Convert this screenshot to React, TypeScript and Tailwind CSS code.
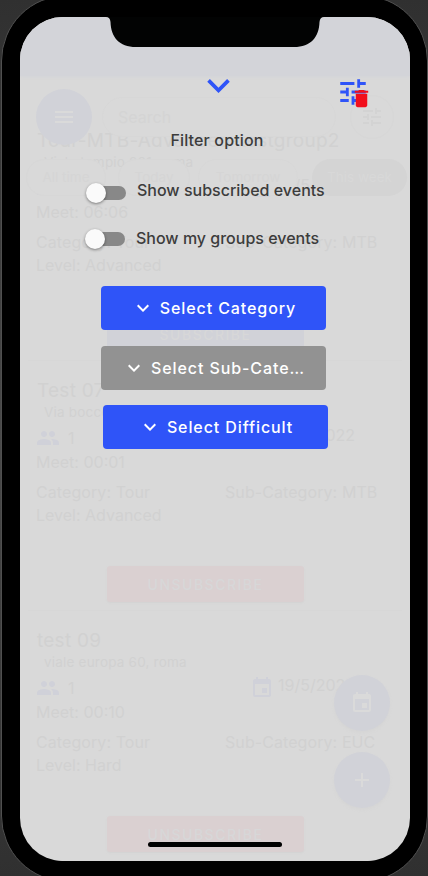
import { useState } from 'react';
import { MdAdd, MdDelete, MdEvent, MdExpandMore, MdGroup, MdMenu, MdTune } from 'react-icons/md';

interface EventItem {
    title: string;
    place: string;
    people: number;
    date: string;
    meet: string;
    category: string;
    subCategory: string;
    level: string;
    subscribed: boolean;
}

const events: EventItem[] = [
    {
        title: 'Tour-MTB-Advanced-testgroup2',
        place: 'Viale tempio 201, roma',
        people: 1,
        date: '19/5/2022',
        meet: '06:06',
        category: 'Tour',
        subCategory: 'MTB',
        level: 'Advanced',
        subscribed: false,
    },
    {
        title: 'Test 07',
        place: 'Via boccea 20, roma',
        people: 1,
        date: '19/5/2022',
        meet: '00:01',
        category: 'Tour',
        subCategory: 'MTB',
        level: 'Advanced',
        subscribed: true,
    },
    {
        title: 'test 09',
        place: 'viale europa 60, roma',
        people: 1,
        date: '19/5/2022',
        meet: '00:10',
        category: 'Tour',
        subCategory: 'EUC',
        level: 'Hard',
        subscribed: true,
    },
];

function EventCard({ event }: { event: EventItem }) {
    return (
        <div className="mx-2 h-[250px] shrink-0 border-b border-[#d7d7d7] pl-[8px] pt-[15px] text-[16px]">
            <div className="h-7 pl-px text-[19px] leading-[29px] tracking-[0.25px] whitespace-nowrap">{event.title}</div>
            <div className="h-4 pl-[8px] text-[13.5px] leading-4 tracking-[0.2px]">{event.place}</div>
            <div className="flex h-[34px] items-center pt-[2px]">
                <MdGroup className="h-6 w-6 text-[#d0d1d9]" />
                <span className="ml-[8px] w-[182px]">{event.people}</span>
                <MdEvent className="h-6 w-6 text-[#d0d1d9]" />
                <span className="ml-[4px] -mt-[6px]">{event.date}</span>
            </div>
            <div className="h-[23px] leading-4">Meet: {event.meet}</div>
            <div className="mt-[3px] flex h-[23px] leading-6 tracking-[0.08px]">
                <span className="w-[189px]">Category: {event.category}</span>
                <span>Sub-Category: {event.subCategory}</span>
            </div>
            <div className="h-[23px] leading-6">Level: {event.level}</div>
            <div
                className={`ml-[71px] mt-[40px] flex h-9 w-[197px] items-center justify-center rounded-[3px] text-[14px] font-medium tracking-[1.5px] text-[#d7d7d8] ${event.subscribed ? 'bg-[#dad0d1] shadow-[0_1px_2px_#d3d3d3]' : 'bg-[#d1d2d8]'}`}
            >
                {event.subscribed ? 'UNSUBSCRIBE' : 'SUBSCRIBE'}
            </div>
        </div>
    );
}

function Switch({ checked, onChange }: { checked: boolean; onChange: () => void }) {
    return (
        <button
            role="switch"
            aria-checked={checked}
            onClick={onChange}
            className={`flex h-[14px] w-[36px] items-center rounded-full ${checked ? 'justify-end bg-[#2f54f8]' : 'bg-[#888888]'}`}
        >
            <span className="-ml-[4px] h-5 w-5 shrink-0 rounded-full bg-[#fafafa] shadow-[0_1px_3px_rgba(0,0,0,0.45)]" />
        </button>
    );
}

function SelectButton({ label, disabled = false }: { label: string; disabled?: boolean }) {
    return (
        <button
            disabled={disabled}
            className={`flex h-11 w-[225px] items-center justify-center rounded-[4px] text-[16px] font-medium tracking-[0.9px] text-white ${disabled ? 'bg-[#929292]' : 'bg-[#2f54f8]'}`}
        >
            <MdExpandMore className="mr-[5px] -mt-px h-6 w-6" />
            {label}
        </button>
    );
}

export default function App() {
    const [subscribed, setSubscribed] = useState(false);
    const [groups, setGroups] = useState(false);

    return (
        <div className="h-[876px] w-[428px] overflow-hidden bg-gradient-to-b from-[#303030] via-[#4a4a4a] to-[#303030] pl-[1px] font-['Inter','Liberation_Sans',sans-serif]">
            <div className="-mt-[5px] h-[887px] w-[427px] rounded-[66px] border border-[#505050] bg-black pl-[18px] pt-[21px]">
                <div className="relative h-[844px] w-[390px] overflow-hidden rounded-[43px] bg-[#d9d9d9]">
                    {/* events page under the sheet */}
                    <div className="flex h-full flex-col text-[#d1d1d1]">
                        <div className="h-[59px] shrink-0 bg-[#d3d4d9] shadow-[0_1px_3px_#d3d4d9]" />
                        <div className="mt-[35px]">
                            {events.map((event) => (
                                <EventCard key={event.title} event={event} />
                            ))}
                        </div>
                    </div>

                    <div className="absolute inset-x-0 top-[71px] flex flex-col">
                        <div className="flex h-[58px] items-center pl-4">
                            <div className="flex h-14 w-14 items-center justify-center rounded-full bg-[#d1d2d8]">
                                <MdMenu className="h-6 w-6 text-[#dadada]" />
                            </div>
                            <div className="ml-[10px] flex h-10 w-[234px] items-center rounded-full border border-[#d7d7d7] bg-[#d9d9d9] pl-[15px] text-[16px] text-[#d4d4d4]">
                                Search
                            </div>
                            <div className="ml-[14px] flex h-11 w-11 items-center justify-center rounded-full border border-[#d7d7d7] bg-[#d9d9d9]">
                                <MdTune className="h-6 w-6 text-[#d3d3d3]" />
                            </div>
                        </div>
                        <div className="mt-[12px] flex h-[38px] pl-[6px] pt-px text-[13.5px] text-[#d5d5d5]">
                            <div className="flex w-[80px] items-center justify-center rounded-full border border-[#d7d7d7] bg-[#d9d9d9]">All time</div>
                            <div className="ml-[12px] flex w-[72px] items-center justify-center rounded-full border border-[#d7d7d7] bg-[#d9d9d9]">Today</div>
                            <div className="ml-[8px] flex w-[100px] items-center justify-center rounded-full border border-[#d7d7d7] bg-[#d9d9d9]">Tomorrow</div>
                            <div className="ml-[14px] flex w-[95px] items-center justify-center rounded-full bg-[#d4d4d4] text-[#d8d8d8]">This week</div>
                        </div>
                    </div>

                    <div className="absolute bottom-[53px] right-5 flex flex-col gap-[21px]">
                        <div className="flex h-14 w-14 items-center justify-center rounded-full bg-[#d1d2d8] shadow-[0_2px_3px_#d5d5d5]">
                            <MdEvent className="h-6 w-6 text-[#dadada]" />
                        </div>
                        <div className="flex h-14 w-14 items-center justify-center rounded-full bg-[#d1d2d8] shadow-[0_2px_3px_#d5d5d5]">
                            <MdAdd className="h-6 w-6 text-[#dadada]" />
                        </div>
                    </div>

                    {/* filter sheet */}
                    <div className="absolute inset-0 flex flex-col text-[16px] font-medium text-[#3c3c3c]">
                        <div className="mx-auto h-[30px] w-[218px]">
                            <svg viewBox="0 0 218 30" className="h-full w-full" fill="#020303">
                                <path d="M0 0H218Q214 0 213.500 5C213 20 205 30 188 30H30C13 30 5 20 4.500 5Q4 0 0 0Z" />
                            </svg>
                        </div>
                        <div className="mt-[16px] flex h-[63px] pl-[176px] text-[#2f54f8]">
                            <MdExpandMore className="h-[45px] w-[45px]" />
                            <div className="relative ml-[95px] mt-[12px] h-[34px] w-[34px]">
                                <MdTune className="h-[34px] w-[34px]" />
                                <MdDelete className="absolute left-[14px] top-[12px] h-[23px] w-[23px] text-[#f20f1c]" />
                            </div>
                        </div>
                        <div className="h-[28px] pl-[4px] text-center leading-[28px] tracking-[0.15px]">Filter option</div>
                        <div className="mt-[25px] flex h-[24px] items-center pl-[70px]">
                            <div className="mt-[4px] flex">
                                <Switch checked={subscribed} onChange={() => setSubscribed(!subscribed)} />
                            </div>
                            <span className="ml-[11px] -mt-[3px]">Show subscribed events</span>
                        </div>
                        <div className="mt-[24px] flex h-[24px] items-center pl-[69px]">
                            <Switch checked={groups} onChange={() => setGroups(!groups)} />
                            <span className="ml-[11px] -mt-[2px]">Show my groups events</span>
                        </div>
                        <div className="mt-[35px] flex flex-col pl-[81px]">
                            <SelectButton label="Select Category" />
                            <div className="mt-4">
                                <SelectButton label="Select Sub-Cate…" disabled />
                            </div>
                            <div className="ml-[2px] mt-[15px]">
                                <SelectButton label="Select Difficult" />
                            </div>
                        </div>
                        <div className="mb-[14px] ml-[128px] mt-auto h-[5px] w-[134px] rounded-full bg-black" />
                    </div>
                </div>
            </div>
        </div>
    );
}
